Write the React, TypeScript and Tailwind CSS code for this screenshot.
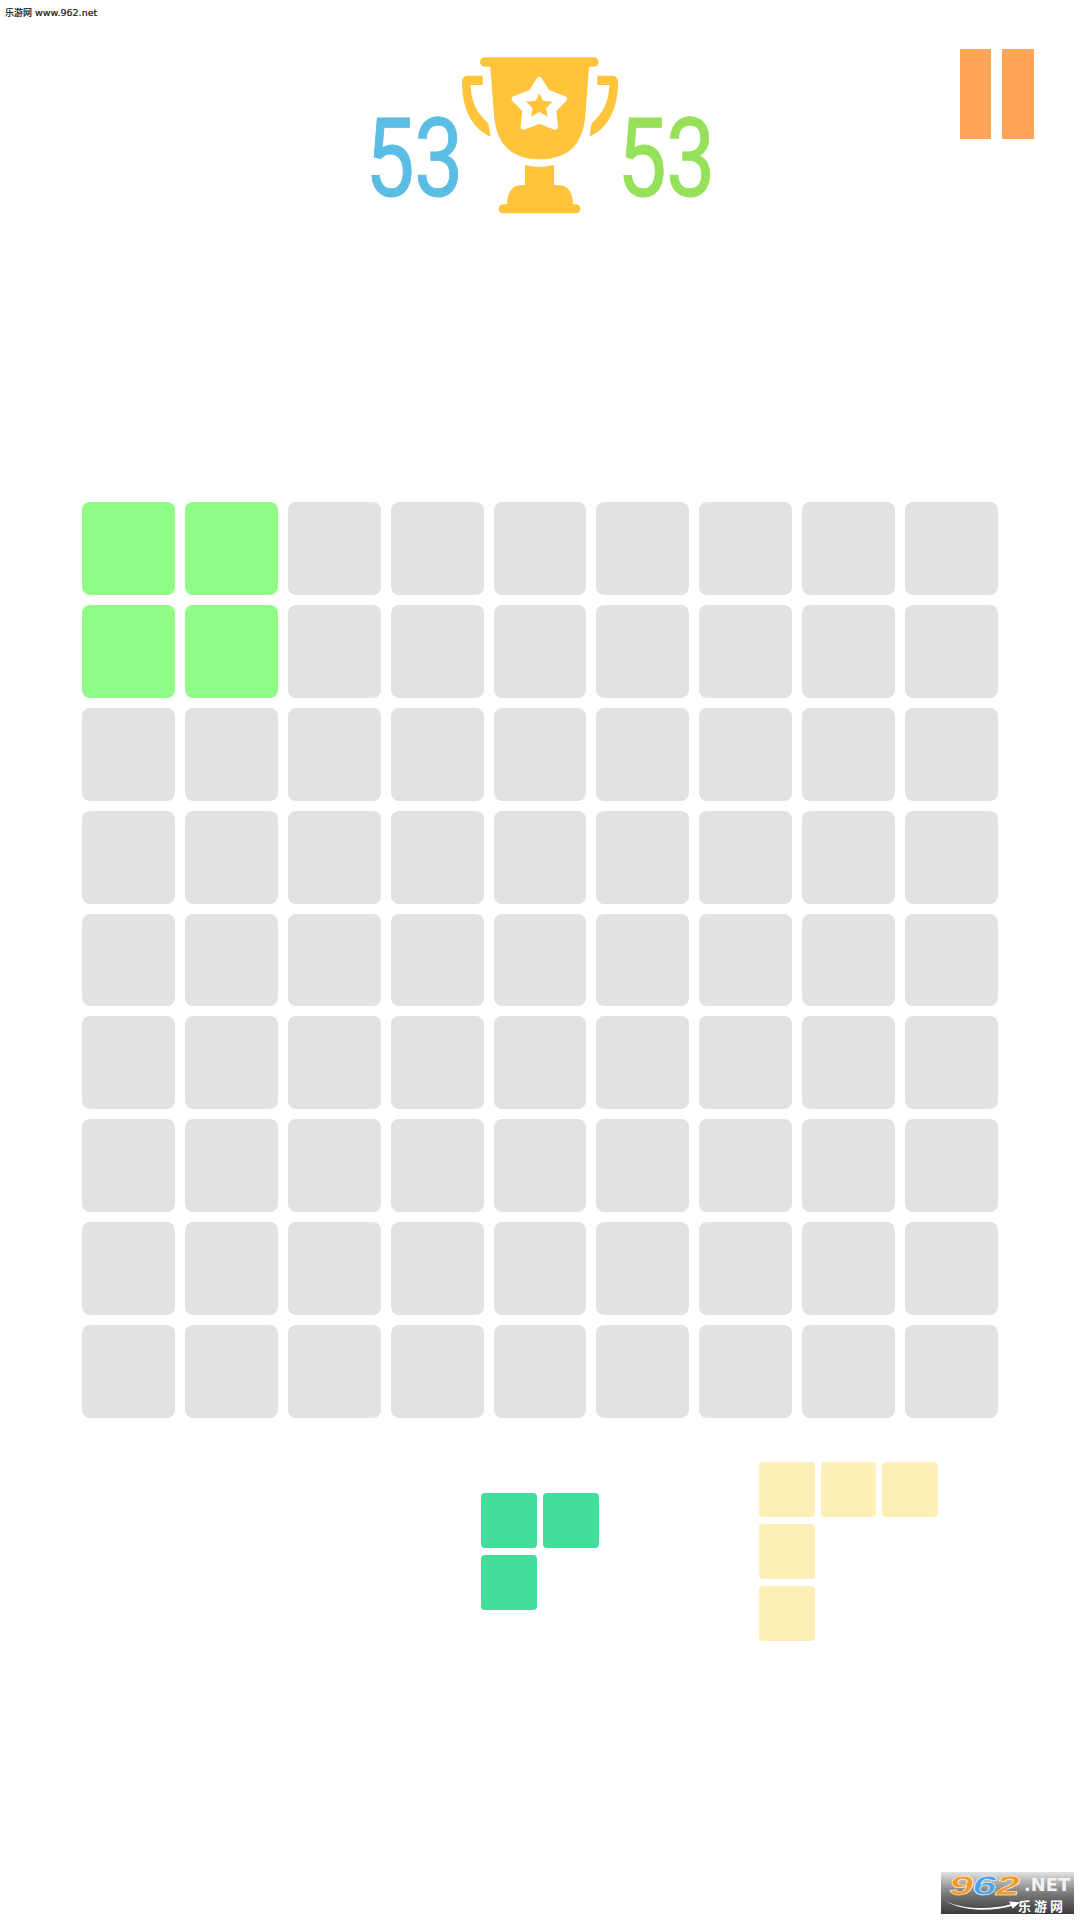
const boardCells = Array.from({ length: 81 }, (_, i) => i);
const activeCells = [0, 1, 9, 10];

function Trophy() {
  return (
    <svg width="156" height="158" viewBox="366 81 468 474" className="block">
      <rect x="420" y="82" width="356" height="28" rx="14" fill="#ffc33c" />
      <path d="M450 100 H748 L736 255 C730 345 682 388 600 388 C518 388 468 345 462 255 Z" fill="#ffc33c" />
      <path d="M428 137 H385 C372 137 366 145 366 155 C366 235 395 295 452 320 L445 280 C418 255 394 225 392 165 H428 Z" fill="#ffc33c" />
      <path d="M772 137 H815 C828 137 834 145 834 155 C834 235 805 295 748 320 L755 280 C782 255 806 225 808 165 H772 Z" fill="#ffc33c" />
      <path d="M555 405 C585 412 615 412 642 405 V465 H655 C682 465 699 485 699 525 H501 C501 485 518 465 545 465 H555 Z" fill="#ffc33c" />
      <rect x="476" y="523" width="245" height="27" rx="13" fill="#ffc33c" />
      <path
        d="M598 150 L622 188 L672 207 L640 240 L645 290 L598 272 L551 290 L556 240 L524 207 L574 188 Z"
        fill="#ffffff"
        stroke="#ffffff"
        strokeWidth="18"
        strokeLinejoin="round"
      />
      <path d="M598 190 L609 212 L638 215 L618 234 L623 260 L598 246 L573 260 L578 234 L558 215 L587 212 Z" fill="#ffc33c" />
    </svg>
  );
}

function Score({ value, color }: { value: number; color: string }) {
  return (
    <div className={`w-[86px] h-[113px] flex items-center justify-center font-['Roboto',sans-serif] font-normal text-[110px] leading-[113px] tracking-[-1px] scale-x-[0.8] [-webkit-text-stroke:1px_currentColor] ${color}`}>
      {value}
    </div>
  );
}

function PieceCell({ color }: { color: string }) {
  return <div className={`h-[55px] rounded-[4px] ${color}`} />;
}

export default function App() {
  return (
    <div className="relative w-[1080px] h-[1920px] bg-white overflow-hidden">
      <div className="absolute left-[5px] top-[6px] flex items-center font-['DejaVu_Sans','Noto_Sans_CJK_SC',sans-serif] text-[9.5px] leading-[14px] text-[#111111] [-webkit-text-stroke:0.2px_#111111]">
        <span className="font-['Noto_Sans_CJK_SC',sans-serif] text-[9px] mr-[3px]">乐游网</span>
        <span>www.962.net</span>
      </div>

      <header className="h-[502px] grid grid-cols-[1fr_156px_1fr] items-start">
        <div className="flex justify-end pt-[102px] pr-[5px]">
          <Score value={53} color="text-[#5bbde3]" />
        </div>
        <div className="pt-[57px]">
          <Trophy />
        </div>
        <div className="flex items-start justify-between pt-[49px] pl-[5px] pr-[46px]">
          <div className="pt-[53px]">
            <Score value={53} color="text-[#96e05a]" />
          </div>
          <div className="flex gap-[11px]">
            <div className="w-[31px] h-[90px] bg-[#ffa55a]" />
            <div className="w-[32px] h-[90px] bg-[#ffa55a]" />
          </div>
        </div>
      </header>

      <div className="mx-[82px] grid grid-cols-9 gap-[10px]">
        {boardCells.map((i) => (
          <div key={i} className={`h-[92.9px] rounded-[8px] ${activeCells.includes(i) ? 'bg-[#90fc86]' : 'bg-[#e2e2e2]'}`} />
        ))}
      </div>

      <div className="flex items-start pl-[481px] gap-[160px]">
        <div className="mt-[75px] w-[118px] grid grid-cols-2 gap-x-[6px] gap-y-[7px]">
          <PieceCell color="bg-[#43dc9a]" />
          <PieceCell color="bg-[#43dc9a]" />
          <PieceCell color="bg-[#43dc9a]" />
        </div>
        <div className="mt-[44px] w-[179px] grid grid-cols-3 gap-x-[6px] gap-y-[7px]">
          <PieceCell color="bg-[#feefb6]" />
          <PieceCell color="bg-[#feefb6]" />
          <PieceCell color="bg-[#feefb6]" />
          <PieceCell color="bg-[#feefb6]" />
          <div className="col-span-2" />
          <PieceCell color="bg-[#feefb6]" />
        </div>
      </div>

      <div className="absolute right-[6px] bottom-[6px] w-[133px] h-[42px] bg-gradient-to-b from-[#e2e2e2] via-[#7c7c7c] to-[#3a3a3a]">
        <svg width="74" height="14" viewBox="0 0 80 14" className="absolute left-[5px] top-[27px]">
          <path d="M0 2 C20 11 50 11 70 5 L68 2 L80 3 L72 10 L71 7 C50 13 20 13 0 2 Z" fill="#ffffff" />
        </svg>
        <span className="absolute left-[8px] top-[1px] origin-left scale-x-[1.55] font-['Liberation_Sans',sans-serif] font-bold italic text-[28px] leading-[26px] tracking-[-0.5px] [-webkit-text-stroke:0.5px_#ffffff]">
          <span className="text-[#f59a23]">9</span>
          <span className="text-[#4aa5e8]">6</span>
          <span className="text-[#f59a23]">2</span>
        </span>
        <span className="absolute left-[83px] top-[3px] origin-left scale-x-[1.05] font-['DejaVu_Sans',sans-serif] font-bold text-[17px] leading-[20px] text-[#f2f2f2]">.NET</span>
        <span className="absolute left-[77px] top-[26px] font-['Noto_Sans_CJK_SC',sans-serif] font-bold text-[13px] leading-[16px] tracking-[3px] text-white">乐游网</span>
      </div>
    </div>
  );
}
